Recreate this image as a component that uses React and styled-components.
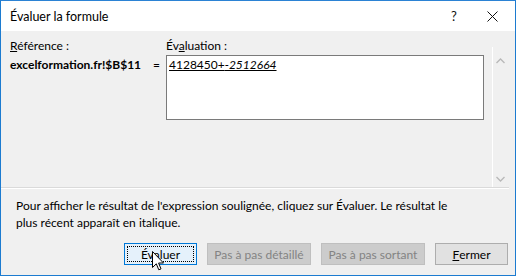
import React from 'react';
import styled, { createGlobalStyle } from 'styled-components';

const GlobalStyle = createGlobalStyle`
    html, body {
        margin: 0;
        padding: 0;
        background: #ffffff;
    }
    body {
        font-family: Lato, 'Liberation Sans', Arial, sans-serif;
        font-size: 12px;
        color: #000;
    }
`;

const Window = styled.div`
    position: relative;
    width: 516px;
    height: 276px;
    box-sizing: border-box;
    border: 1px solid #1c7bd0;
    border-top-color: #2b82d4;
    display: flex;
    flex-direction: column;
    background: #f0f0f0;
    overflow: hidden;
`;

const TitleBar = styled.div`
    height: 30px;
    flex: none;
    background: #ffffff;
    display: flex;
    align-items: center;
    padding-left: 9px;
    font-size: 12.5px;

    .title {
        flex: 1;
    }
`;

const TitleButton = styled.div`
    width: ${(p) => p.w}px;
    height: 30px;
    display: flex;
    align-items: center;
    justify-content: center;
    font-size: 13px;
    color: #111;
`;

const Main = styled.div`
    display: flex;
    padding-left: 9px;
    height: 156px;
    flex: none;
`;

const Fields = styled.div`
    flex: 1;
    display: grid;
    grid-template-columns: 143px 13px 318px;
    grid-template-rows: 17px 65px;
    padding-top: 7px;
    align-content: start;
`;

const Label = styled.div`
    line-height: 15px;
`;

const RefValue = styled.div`
    font-weight: bold;
    padding-top: 2px;
    line-height: 15px;
`;

const Equals = styled.div`
    padding-top: 2px;
    line-height: 15px;
`;

const Expression = styled.div`
    box-sizing: border-box;
    height: 65px;
    background: #ffffff;
    border: 1px solid #7a7a7a;
    padding: 1px 2px;
    line-height: 15px;
    text-decoration: underline;

    i {
        font-style: italic;
    }
`;

const ScrollTrack = styled.div`
    width: 15px;
    margin-right: 7px;
    margin-top: 16px;
    border-left: 1px solid #ffffff;
    display: flex;
    flex-direction: column;
    justify-content: space-between;
    align-items: center;
    padding: 11px 0 5px;
    color: #b8b8b8;
`;

const Separator = styled.div`
    height: 1px;
    background: #dadada;
    border-bottom: 1px solid #ffffff;
    margin-right: 6px;
    flex: none;
`;

const Hint = styled.p`
    margin: 0;
    padding: 8px 60px 0 15px;
    line-height: 17px;
    height: 47px;
    box-sizing: border-box;
    font-size: 12px;
    flex: none;
`;

const ButtonRow = styled.div`
    display: flex;
    justify-content: flex-end;
    gap: 10px;
    padding: 7px 7px 0 0;
`;

const Button = styled.div`
    box-sizing: border-box;
    width: ${(p) => p.w}px;
    height: 22px;
    display: flex;
    align-items: center;
    justify-content: center;
    font-size: 12px;
    border: 1px solid ${(p) => (p.primary ? '#0078d7' : p.disabled ? '#bfbfbf' : '#adadad')};
    background: ${(p) => (p.primary ? '#e5f1fb' : p.disabled ? '#cccccc' : '#e1e1e1')};
    color: ${(p) => (p.disabled ? '#838383' : '#000')};
    position: relative;

    ${(p) =>
        p.primary &&
        `
        &::after {
            content: '';
            position: absolute;
            inset: 2px;
            border: 1px dotted #000;
        }
    `}
`;

const Cursor = styled.svg`
    position: absolute;
    left: 151px;
    top: 250px;
`;

const Chevron = ({ up }) => (
    <svg width="9" height="6" viewBox="0 0 9 6">
        <path
            d={up ? 'M0.5 5 L4.5 1 L8.5 5' : 'M0.5 1 L4.5 5 L8.5 1'}
            fill="none"
            stroke="currentColor"
            strokeWidth="1.3"
        />
    </svg>
);

export default function App() {
    return (
        <>
            <GlobalStyle />
            <Window>
                <TitleBar>
                    <span className="title">Évaluer la formule</span>
                    <TitleButton w={30}>?</TitleButton>
                    <TitleButton w={46}>
                        <svg width="11" height="11" viewBox="0 0 11 11">
                            <path d="M0.5 0.5 L10.5 10.5 M10.5 0.5 L0.5 10.5" stroke="#111" strokeWidth="1" />
                        </svg>
                    </TitleButton>
                </TitleBar>
                <Main>
                    <Fields>
                        <Label>
                            <u>R</u>éférence :
                        </Label>
                        <span />
                        <Label>
                            Év<u>a</u>luation :
                        </Label>
                        <RefValue>excelformation.fr!$B$11</RefValue>
                        <Equals>=</Equals>
                        <Expression>
                            4128450+<i>-2512664</i>
                        </Expression>
                    </Fields>
                    <ScrollTrack>
                        <Chevron up />
                        <Chevron />
                    </ScrollTrack>
                </Main>
                <Separator />
                <Hint>
                    Pour afficher le résultat de l'expression soulignée, cliquez sur Évaluer. Le résultat le
                    plus récent apparaît en italique.
                </Hint>
                <ButtonRow>
                    <Button w={73} primary>
                        Év<u>a</u>luer
                    </Button>
                    <Button w={104} disabled>
                        Pas à pas détaillé
                    </Button>
                    <Button w={104} disabled>
                        Pas à pas sortant
                    </Button>
                    <Button w={73}>
                        <u>F</u>ermer
                    </Button>
                </ButtonRow>
                <Cursor width="13" height="21" viewBox="0 0 13 21">
                    <path
                        d="M0.5 0.5 L0.5 16.5 L4.3 12.8 L6.8 18.8 L9 17.9 L6.6 12 L11.5 12 Z"
                        fill="#ffffff"
                        stroke="#000"
                        strokeWidth="1"
                        strokeLinejoin="miter"
                    />
                </Cursor>
            </Window>
        </>
    );
}
